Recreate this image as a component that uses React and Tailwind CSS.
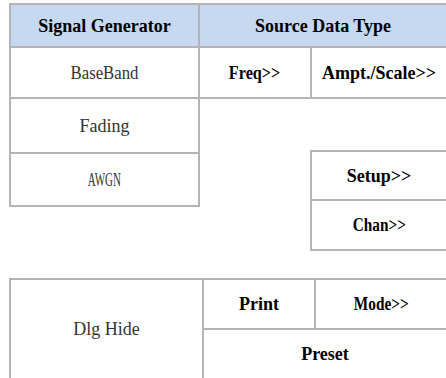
const line = 'border-[#b4b4b4]'

function Label({ text, bold, squeeze = '' }) {
  return (
    <span
      className={
        'inline-block whitespace-nowrap text-[18px] leading-none ' +
        squeeze +
        ' ' +
        (bold ? 'font-bold text-black' : 'font-normal text-[#333333]')
      }
      style={{ fontFamily: '"Liberation Serif", "Noto Sans CJK SC", serif' }}
    >
      {text}
    </span>
  )
}

function Cell({ className = '', text, bold, squeeze }) {
  return (
    <div className={'flex items-center justify-center border-r-2 border-b-2 ' + line + ' ' + className}>
      <Label text={text} bold={bold} squeeze={squeeze} />
    </div>
  )
}

export default function App() {
  return (
    <div className="w-[446px] h-[378px] overflow-hidden bg-white">
      <div className="pl-[9px] pt-[3px] w-[448px]">
        <div className="flex items-start">
          <div className={'w-[191px] flex flex-col border-l-2 border-t-2 ' + line}>
            <Cell className="h-[43px] bg-[#c6d9f1]" text="Signal Generator" bold />
            <Cell className="h-[51px]" text="BaseBand" squeeze="scale-x-[0.93]" />
            <Cell className="h-[55px]" text="Fading" />
            <Cell className="h-[53px]" text="AWGN" squeeze="scale-x-[0.61]" />
          </div>
          <div className="flex flex-col w-[248px]">
            <div className={'flex flex-col border-t-2 ' + line}>
              <Cell className="h-[43px] bg-[#c6d9f1]" text="Source Data Type" bold />
              <div className="flex">
                <Cell className="h-[51px] w-[112px]" text="Freq>>" bold squeeze="scale-x-[0.9]" />
                <Cell className="h-[51px] flex-1" text="Ampt./Scale>>" bold />
              </div>
            </div>
            <div className={'mt-[51px] ml-[110px] flex flex-col border-l-2 border-t-2 ' + line}>
              <Cell className="h-[49px]" text="Setup>>" bold />
              <Cell className="h-[50px]" text="Chan>>" bold squeeze="scale-x-[0.85]" />
            </div>
          </div>
        </div>

        <div className={'mt-[27px] flex border-l-2 border-t-2 ' + line}>
          <Cell className="w-[193px] h-[100px]" text="Dlg Hide" />
          <div className="flex-1 flex flex-col">
            <div className="flex">
              <Cell className="h-[50px] w-[112px]" text="Print" bold />
              <Cell className="h-[50px] flex-1" text="Mode>>" bold squeeze="scale-x-[0.85]" />
            </div>
            <Cell className="h-[50px]" text="Preset" bold />
          </div>
        </div>
      </div>
    </div>
  )
}
